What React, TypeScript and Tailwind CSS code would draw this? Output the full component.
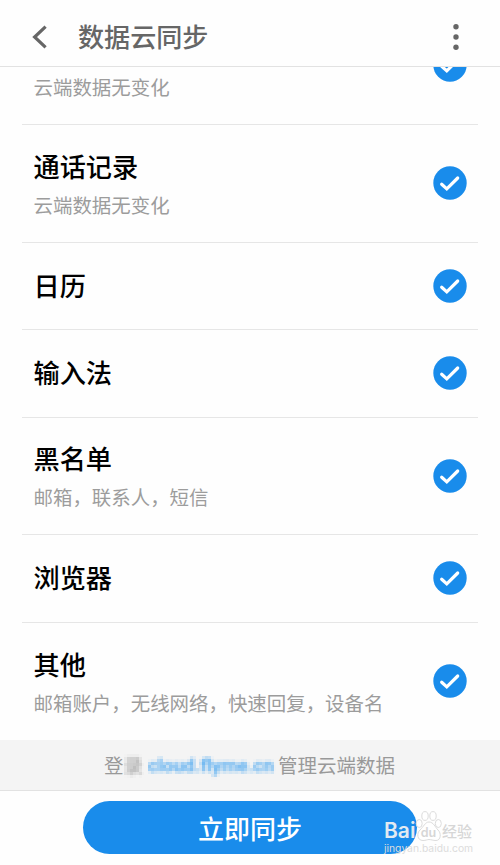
interface SyncItem {
    id: string
    title: string
    detail?: string
    height: string
}

const items: SyncItem[] = [
    { id: 'sms', title: '', detail: '云端数据无变化', height: 'h-[118px]' },
    {
        id: 'calls',
        title: '通话记录',
        detail: '云端数据无变化',
        height: 'h-[118px]'
    },
    { id: 'calendar', title: '日历', height: 'h-[87px]' },
    { id: 'input', title: '输入法', height: 'h-[88px]' },
    {
        id: 'blacklist',
        title: '黑名单',
        detail: '邮箱，联系人，短信',
        height: 'h-[117px]'
    },
    { id: 'browser', title: '浏览器', height: 'h-[88px]' },
    {
        id: 'other',
        title: '其他',
        detail: '邮箱账户，无线网络，快速回复，设备名',
        height: 'h-[117px]'
    }
]

function CheckCircle() {
    return (
        <svg className="mb-px h-[34px] w-[34px] shrink-0" viewBox="0 0 34 34">
            <circle cx="17" cy="17" r="16.7" fill="#198ceb" />
            <path
                d="M8.700 18.2L13.800 22.900L24.700 12"
                fill="none"
                stroke="#fff"
                strokeWidth="3.2"
                strokeLinecap="round"
            />
        </svg>
    )
}

function SyncRow({ item }: { item: SyncItem }) {
    return (
        <div
            className={`flex shrink-0 items-center justify-between border-b border-[#e6e6e6] pr-[11.5px] pl-[11.5px] last:border-b-0 ${item.height}`}
        >
            <div className={`flex flex-col ${item.detail ? 'pt-0.5' : 'pb-1'}`}>
                <h2 className="h-[39px] text-[26.2px] leading-[41px] font-medium text-black">
                    {item.title}
                </h2>
                {item.detail && (
                    <p className="text-[19.45px] leading-[39px] text-[#9c9c9c]">
                        {item.detail}
                    </p>
                )}
            </div>
            <CheckCircle />
        </div>
    )
}

function Header() {
    return (
        <header className="flex h-[67px] items-center border-b border-[#e2e2e2] pt-[7px] pr-[39px] pl-8">
            <svg
                className="h-6 w-4"
                viewBox="0 0 16 24"
                fill="none"
                stroke="#666"
                strokeWidth="3.2"
            >
                <path d="M13.600 1.7L2.600 12L13.600 22.300" />
            </svg>
            <h1 className="ml-[30px] grow pb-px text-[26.1px] leading-[39px] font-medium text-[#666]">
                数据云同步
            </h1>
            <svg className="h-[26px] w-[10px]" viewBox="0 0 10 26" fill="#666">
                <circle cx="5" cy="2.8" r="2.7" />
                <circle cx="5" cy="13" r="2.7" />
                <circle cx="5" cy="23.2" r="2.7" />
            </svg>
        </header>
    )
}

// Splits the text into square blocks
function MosaicFilter() {
    return (
        <svg className="absolute h-0 w-0">
            <filter
                id="mosaic"
                x="0"
                y="0"
                width="1"
                height="1"
                colorInterpolationFilters="sRGB"
            >
                <feGaussianBlur stdDeviation="1.4" result="soft" />
                <feFlood x="1" y="1" width="1" height="1" />
                <feComposite width="3" height="3" />
                <feTile result="grid" />
                <feComposite in="soft" in2="grid" operator="in" />
                <feMorphology operator="dilate" radius="1" />
            </filter>
        </svg>
    )
}

function Watermark() {
    return (
        <div className="absolute top-[810px] left-[384px] flex flex-col">
            <div className="flex h-[32px] items-end">
                <span className="w-[31px] font-[Inter] text-[21px] leading-[23px] font-semibold text-[#e2eaf2]">
                    Bai
                </span>
                <svg
                    className="h-[32px] w-[27px] shrink-0"
                    viewBox="0 0 27 32"
                >
                    <g
                        fill="#fff"
                        fillOpacity="0.85"
                        stroke="#dcdcdc"
                        strokeWidth="1"
                    >
                        <ellipse cx="4.2" cy="13.5" rx="3" ry="4" />
                        <ellipse cx="10" cy="6" rx="3.2" ry="4.4" />
                        <ellipse cx="18" cy="6" rx="3.2" ry="4.4" />
                        <ellipse cx="23.300" cy="13.5" rx="3" ry="4" />
                        <path d="M14 12C10 12 8.500 17 5 20C1.500 23 2 30.500 8 30.500C11 30.500 12 29.500 14 29.500C16 29.500 18 30.500 21 30.500C26 30.500 26.500 23 23 20C20 17 18.500 12 14 12Z" />
                    </g>
                    <text
                        x="13.500"
                        y="27"
                        textAnchor="middle"
                        fontFamily="Inter"
                        fontSize="12.5"
                        fontWeight="600"
                        fill="#d6d6d6"
                    >
                        du
                    </text>
                </svg>
                <span className="text-[15px] leading-[22px] font-medium text-[#d6d6d6]">
                    经验
                </span>
            </div>
            <span className="font-[Inter] text-[10.3px] leading-3 text-[#dcdcdc]">
                jingyan.baidu.com
            </span>
        </div>
    )
}

function App() {
    return (
        <div className="relative flex h-[865px] w-[500px] flex-col overflow-hidden bg-[#fefefe] font-['Noto_Sans_CJK_SC',sans-serif]">
            <MosaicFilter />
            <Header />
            <main className="flex h-[673px] flex-col justify-end overflow-hidden px-[22px]">
                {items.map(item => (
                    <SyncRow key={item.id} item={item} />
                ))}
            </main>
            <div className="flex h-[51px] items-center border-b border-[#e2e2e2] bg-[#f4f4f4] pb-px pl-[104px] text-[19.5px] leading-[39px] text-[#999]">
                <span>登</span>
                <span className="[filter:url(#mosaic)]">录</span>
                <span className="ml-[5px] w-[128px] pt-0.5 font-[Roboto] text-[18.9px] font-bold whitespace-nowrap text-[#52aaf0] [filter:url(#mosaic)]">
                    cloud.flyme.cn
                </span>
                <span className="ml-[2px]">管理云端数据</span>
            </div>
            <footer className="flex grow justify-center pt-[10px]">
                <button className="h-[53px] w-[334px] rounded-full bg-[#198ceb] text-[26px] leading-[39px] font-medium text-white">
                    立即同步
                </button>
            </footer>
            <Watermark />
        </div>
    )
}

export default App
